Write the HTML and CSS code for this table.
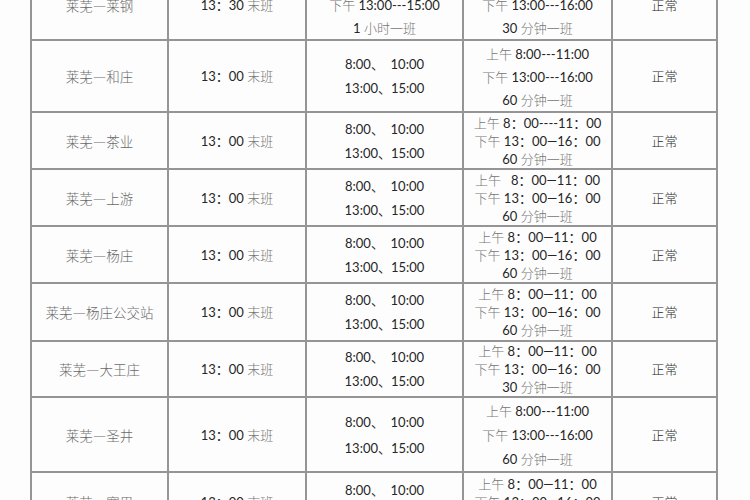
FILE: index.html
```html
<!DOCTYPE html>
<html lang="zh">
<head>
<meta charset="utf-8">
<title>班次表</title>
<link rel="stylesheet" href="styles.css">
</head>
<body>
<table class="sheet">
  <colgroup>
    <col class="c-route"><col class="c-last"><col class="c-times"><col class="c-span"><col class="c-state">
  </colgroup>
  <tr class="r-first">
    <td class="route">莱芜—莱钢</td>
    <td>13：30 <span class="zh">末班</span></td>
    <td class="wide"><div><span class="zh">上午</span> 8:00---11:00</div><div><span class="zh">下午</span> 13:00---15:00</div><div>1 <span class="zh">小时一班</span></div></td>
    <td class="wide"><div><span class="zh">上午</span> 8:00---11:00</div><div><span class="zh">下午</span> 13:00---16:00</div><div>30 <span class="zh">分钟一班</span></div></td>
    <td class="zh">正常</td>
  </tr>
  <tr class="r-tall">
    <td class="route">莱芜—和庄</td>
    <td>13：00 <span class="zh">末班</span></td>
    <td class="pair"><div>8:00、  10:00</div><div>13:00、15:00</div></td>
    <td class="wide"><div><span class="zh">上午</span> 8:00---11:00</div><div><span class="zh">下午</span> 13:00---16:00</div><div>60 <span class="zh">分钟一班</span></div></td>
    <td class="zh">正常</td>
  </tr>
  <tr class="r-std">
    <td class="route">莱芜—茶业</td>
    <td>13：00 <span class="zh">末班</span></td>
    <td class="pair"><div>8:00、  10:00</div><div>13:00、15:00</div></td>
    <td class="tight"><div><span class="zh">上午</span> 8：00----11：00</div><div><span class="zh">下午</span> 13：00—16：00</div><div>60 <span class="zh">分钟一班</span></div></td>
    <td class="zh">正常</td>
  </tr>
  <tr class="r-std">
    <td class="route">莱芜—上游</td>
    <td>13：00 <span class="zh">末班</span></td>
    <td class="pair"><div>8:00、  10:00</div><div>13:00、15:00</div></td>
    <td class="tight"><div><span class="zh">上午</span>   8：00—11：00</div><div><span class="zh">下午</span> 13：00—16：00</div><div>60 <span class="zh">分钟一班</span></div></td>
    <td class="zh">正常</td>
  </tr>
  <tr class="r-std">
    <td class="route">莱芜—杨庄</td>
    <td>13：00 <span class="zh">末班</span></td>
    <td class="pair"><div>8:00、  10:00</div><div>13:00、15:00</div></td>
    <td class="tight"><div><span class="zh">上午</span> 8：00—11：00</div><div><span class="zh">下午</span> 13：00—16：00</div><div>60 <span class="zh">分钟一班</span></div></td>
    <td class="zh">正常</td>
  </tr>
  <tr class="r-std5">
    <td class="route">莱芜—杨庄公交站</td>
    <td>13：00 <span class="zh">末班</span></td>
    <td class="pair"><div>8:00、  10:00</div><div>13:00、15:00</div></td>
    <td class="tight"><div><span class="zh">上午</span> 8：00—11：00</div><div><span class="zh">下午</span> 13：00—16：00</div><div>60 <span class="zh">分钟一班</span></div></td>
    <td class="zh">正常</td>
  </tr>
  <tr class="r-std6">
    <td class="route">莱芜—大王庄</td>
    <td>13：00 <span class="zh">末班</span></td>
    <td class="pair"><div>8:00、  10:00</div><div>13:00、15:00</div></td>
    <td class="tight"><div><span class="zh">上午</span> 8：00—11：00</div><div><span class="zh">下午</span> 13：00—16：00</div><div>30 <span class="zh">分钟一班</span></div></td>
    <td class="zh">正常</td>
  </tr>
  <tr class="r-long">
    <td class="route">莱芜—圣井</td>
    <td>13：00 <span class="zh">末班</span></td>
    <td class="pair loose"><div>8:00、  10:00</div><div>13:00、15:00</div></td>
    <td class="loose"><div><span class="zh">上午</span> 8:00---11:00</div><div><span class="zh">下午</span> 13:00---16:00</div><div>60 <span class="zh">分钟一班</span></div></td>
    <td class="zh">正常</td>
  </tr>
  <tr class="r-last">
    <td class="route">莱芜—寨里</td>
    <td>13：00 <span class="zh">末班</span></td>
    <td class="pair"><div>8:00、  10:00</div><div>13:00、15:00</div></td>
    <td class="tight"><div><span class="zh">上午</span> 8：00—11：00</div><div><span class="zh">下午</span> 13：00—16：00</div><div>60 <span class="zh">分钟一班</span></div></td>
    <td class="zh">正常</td>
  </tr>
</table>
</body>
</html>
```
FILE: styles.css
```css
html, body {
  margin: 0;
  padding: 0;
  background: #fdfdfd;
  overflow: hidden;
  height: 500px;
}

.sheet {
  margin: -32px 0 0 30px;
  border-collapse: collapse;
  table-layout: fixed;
  width: 686px;
}

.c-route { width: 137px; }
.c-last { width: 138px; }
.c-times { width: 157px; }
.c-span { width: 149px; }
.c-state { width: 105px; }

.sheet td {
  --lh: 18px;
  border: 2px solid #959595;
  padding: 0;
  text-align: center;
  vertical-align: middle;
  font-family: Lato, "Noto Sans CJK SC", sans-serif;
  font-size: 13px;
  line-height: var(--lh);
  color: #262626;
  white-space: pre;
}

.sheet td div {
  height: var(--lh);
  line-height: var(--lh);
}

.zh {
  font-family: "Noto Sans CJK SC", sans-serif;
  font-weight: 300;
  color: #767676;
}

.sheet td.route {
  font-family: "Noto Sans CJK SC", sans-serif;
  font-weight: 300;
  font-size: 13.5px;
  color: #6a6a6a;
}

.sheet td.pair { --lh: 24px; }
.sheet td.wide { --lh: 23px; }
.sheet td.loose { --lh: 26px; }
.sheet td.tight { --lh: 18px; }
.sheet td.loose:not(.pair) { --lh: 24px; }

.r-first { height: 70px; }
.r-tall { height: 72px; }
.r-std { height: 57px; }
.r-std5 { height: 58px; }
.r-std6 { height: 56px; }
.r-long { height: 75px; }
.r-last { height: 60px; }
```
